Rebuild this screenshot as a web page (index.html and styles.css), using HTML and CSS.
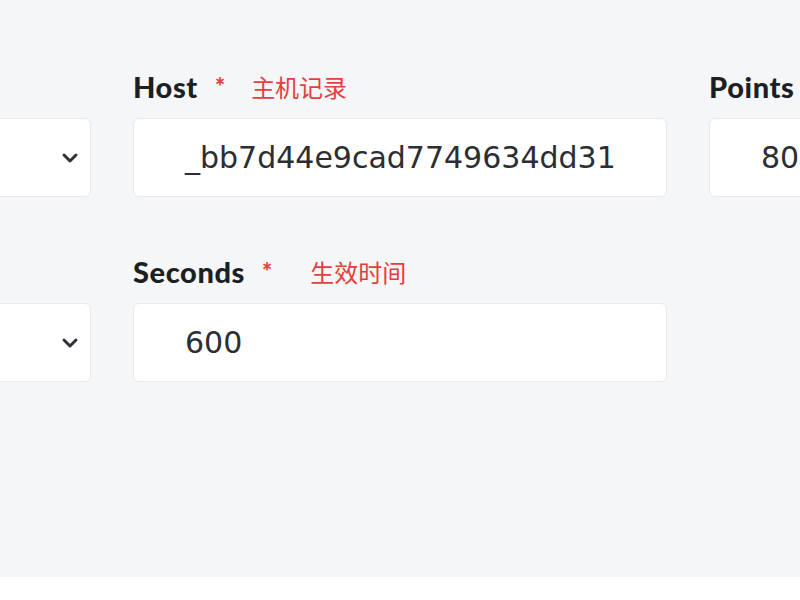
FILE: index.html
```html
<!DOCTYPE html>
<html lang="zh">
<head>
<meta charset="utf-8">
<link rel="stylesheet" href="styles.css">
</head>
<body>
<div class="panel">
  <div class="grid">
    <div class="field">
      <div class="label"></div>
      <div class="box select">
        <svg class="chev" width="18" height="12" viewBox="0 0 18 12"><path d="M3 3 L9 9 L15 3" fill="none" stroke="#2f3237" stroke-width="3" stroke-linecap="round" stroke-linejoin="round"/></svg>
      </div>
    </div>
    <div class="field">
      <div class="label"><span class="name">Host</span><span class="req">*</span><span class="hint">主机记录</span></div>
      <div class="box"><span class="value">_bb7d44e9cad7749634dd31</span></div>
    </div>
    <div class="field">
      <div class="label"><span class="name">Points</span></div>
      <div class="box"><span class="value">80</span></div>
    </div>
    <div class="field">
      <div class="label"></div>
      <div class="box select">
        <svg class="chev" width="18" height="12" viewBox="0 0 18 12"><path d="M3 3 L9 9 L15 3" fill="none" stroke="#2f3237" stroke-width="3" stroke-linecap="round" stroke-linejoin="round"/></svg>
      </div>
    </div>
    <div class="field">
      <div class="label"><span class="name">Seconds</span><span class="req">*</span><span class="hint hint-wide">生效时间</span></div>
      <div class="box"><span class="value">600</span></div>
    </div>
  </div>
</div>
</body>
</html>
```
FILE: styles.css
```css
html, body {
  margin: 0;
  padding: 0;
  background: #ffffff;
  overflow: hidden;
}
.panel {
  height: 577px;
  background: #f5f6f8;
  overflow: hidden;
  padding-top: 67px;
  box-sizing: border-box;
}
.grid {
  display: grid;
  grid-template-columns: 534px 534px 534px;
  column-gap: 42px;
  row-gap: 55px;
  margin-left: -443px;
}
.field {
  display: flex;
  flex-direction: column;
  gap: 13px;
}
.label {
  height: 38px;
  display: flex;
  align-items: center;
  font-family: Lato, "Noto Sans CJK SC", sans-serif;
}
.name {
  font-weight: 900;
  font-size: 29px;
  color: #1c1f24;
  letter-spacing: 0.6px;
}
.req {
  color: #e0453f;
  font-size: 24px;
  font-weight: 900;
  margin-left: 17px;
  position: relative;
  top: 0;
}
.hint {
  color: #e2403e;
  font-family: "Noto Sans CJK SC", sans-serif;
  font-size: 24px;
  margin-left: 26px;
}
.hint-wide {
  margin-left: 38px;
}
.box {
  height: 79px;
  background: #ffffff;
  border: 1px solid #e8eaed;
  border-radius: 6px;
  box-sizing: border-box;
  display: flex;
  align-items: center;
  padding-left: 51px;
  padding-right: 11px;
  font-family: "DejaVu Sans", sans-serif;
  font-size: 30px;
  color: #2b2e33;
}
.select {
  justify-content: flex-end;
}
.chev {
  flex: none;
}
```
